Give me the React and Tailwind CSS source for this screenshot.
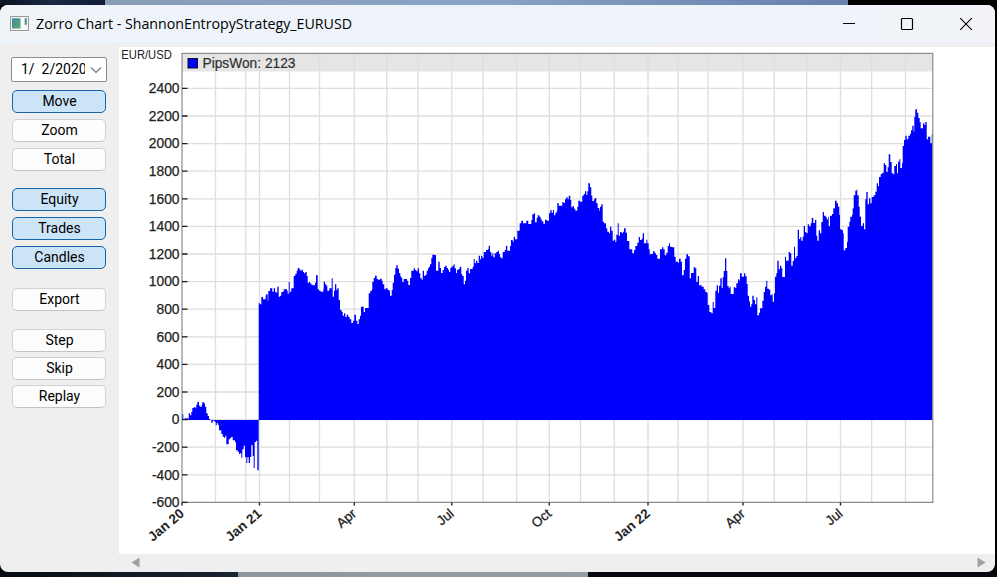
const toggleGroups = [
  {
    className: "mt-[8px] gap-[6px]",
    items: [
      { label: "Move", active: true },
      { label: "Zoom" },
      { label: "Total" },
    ],
  },
  {
    className: "mt-[17px] gap-[6px]",
    items: [
      { label: "Equity", active: true },
      { label: "Trades", active: true },
      { label: "Candles", active: true },
    ],
  },
  { className: "mt-[19px]", items: [{ label: "Export" }] },
  {
    className: "mt-[18px] gap-[5px]",
    items: [{ label: "Step" }, { label: "Skip" }, { label: "Replay" }],
  },
];

// Step series "x,y x,y ...", in thirds of a pixel from the segment's own origin
const segments = [
  {
    x: 120,
    y: 370,
    steps:
      "186,133 190,148 194,145 205,148 206,130 210,136 214,126 217,114 221,112 227,115 229,104 232,96 237,107 241,111 245,104 247,96 251,100 255,110 259,130 263,138 267,147 271,150 274,158 278,152 284,156 287,166 290,160 294,165 297,181 304,192 308,200 312,203 316,197 319,223 326,208 330,204 334,201 338,211 345,217 348,241 353,245 357,252 361,249 364,263 367,238 371,227 375,261 379,279 382,262 386,279 390,261 394,226 398,258 401,294 404,216 408,212 412,301",
  },
  {
    x: 250,
    y: 250,
    steps:
      "26,160 30,163 34,141 39,148 43,148 47,136 49,133 53,152 55,123 60,115 67,125 71,115 75,125 79,128 82,110 86,140 90,137 94,126 99,125 101,118 111,122 113,131 116,96 119,130 120,125 124,115 131,78 136,71 140,62 143,54 148,58 151,62 155,59 159,66 162,70 166,66 170,78 173,98 177,96 180,100 184,104 188,106 195,98 198,76 203,118 207,122 212,125 220,118 221,95 225,103 229,107 232,122 238,115 245,85 248,140 252,122 255,103 259,120 262,115 266,150 270,180 275,186 278,197 282,190 286,201 290,194 295,201 299,208 304,219 309,212 313,194 318,212 322,222 326,208 330,197 333,170 341,186 345,174 356,130 361,122 366,118 367,95 371,84 375,77 380,87 384,89 390,86 395,92 398,103 403,118 407,115 413,120 418,122 420,137 425,120 428,98 432,74 436,54 439,46 443,56 447,69 451,79 454,84 457,96 461,87 471,92 475,105 480,84 484,62 491,55 495,60 499,64 503,55 507,70 511,85 515,89 518,62 522,78 526,74 530,62 534,55 537,50",
  },
  {
    x: 430,
    y: 170,
    steps:
      "0,283 4,264 7,254 14,255 18,302 25,275 29,294 33,309 38,300 42,291 46,287 50,294 54,299 57,306 61,294 64,290 68,287 71,283 74,295 78,309 81,300 85,297 89,290 94,313 97,318 101,343 105,332 108,302 112,294 116,310 120,297 128,290 131,267 134,280 138,272 142,279 146,257 150,268 153,257 157,264 161,246 168,240 174,238 176,227 180,246 184,257 187,250 190,262 194,250 199,246 203,242 207,252 210,262 214,265 218,246 224,240 228,227 232,242 240,228 243,210 248,215 251,200 255,208 262,182 269,160 274,152 279,160 289,152 295,162 304,150 307,133 312,130 315,157 320,143 323,136 328,140 332,148 335,154 340,161 345,149 350,152 357,130 361,121 365,128 369,119 372,136 376,128 380,122 382,99 386,107 397,96 401,99 405,88 409,82 413,88 416,77 421,90 424,112 428,108 432,116 436,122 442,110 445,92 450,95 457,77 461,72 465,64 469,75 472,64 475,40 480,52 484,77 487,93 492,88 495,84 499,100 503,114 508,122",
  },
  {
    x: 600,
    y: 190,
    steps:
      "0,50 4,43 8,95 12,100 18,115 22,125 27,130 30,110 34,122 38,152 42,149 46,156 49,134 53,100 56,137 60,126 65,130 69,125 72,115 77,128 81,153 88,178 97,190 102,180 106,168 112,158 116,141 120,150 125,146 128,130 132,160 139,149 142,160 146,178 149,193 155,192 159,184 164,190 168,195 172,206 177,206 180,178 186,172 190,178 194,196 199,188 203,168 207,160 210,170 215,172 223,200 227,215 234,218 237,206 242,215 246,256 251,240 255,206 259,193 264,199 269,265 273,249 281,232 286,235 289,276 293,258 297,286 305,290 311,298 316,306 321,310 323,345 328,366 334,370 338,336 341,354 346,302 350,286 354,308 357,287 361,265 365,294 368,262 371,243 375,205 379,243 382,288 386,295 389,290 392,312 401,292 406,294 409,280 414,268 418,272 420,250 425,260 432,250 436,259 440,282 443,317 447,334",
  },
  {
    x: 750,
    y: 90,
    steps:
      "0,650 4,643 7,617 11,630 15,643 19,622 22,676 27,668 30,655 37,632 41,606 45,590 49,572 52,596 57,599 61,616 65,613 68,635 72,610 75,560 79,550 82,512 86,538 90,527 94,535 97,561 105,500 108,512 116,486 120,490 124,527 128,513 132,470 135,505 139,498 143,419 147,447 151,441 154,452 158,440 161,408 165,426 169,430 173,403 177,409 182,400 185,384 190,399 195,390 199,437 202,452 206,421 210,430 214,396 218,366 222,377 227,381 230,388 234,380 236,409 240,377 246,372 250,355 255,332 260,340 264,350 268,374 270,418 275,421 279,430 281,481 286,474 291,456 293,410 298,395 301,380 306,374 308,355 311,316 316,302 320,298 322,316 326,350 329,380 333,408 338,400 342,418 346,328 349,306 353,343 357,325 361,340 365,321 371,316 376,305 380,280 384,288 387,261 392,252 397,248 401,220 405,225 409,246 413,232 416,193 421,216 425,250 430,253 433,228 438,222 441,250 444,215 448,208 451,234 456,220 458,168 462,150 466,137 470,148 475,137 480,132 483,121 487,107 491,125 493,80 496,58 501,68 505,84 509,97 512,115 519,100 523,105 526,96 530,148 534,140 541,160 545,133",
  },
];

const ZERO_Y = 420;

const buildAreaPath = () => {
  let d = `M182 ${ZERO_Y}`;
  segments.forEach((segment, index) => {
    // the equity jumps after the first segment, so it is closed on the zero line
    if (index === 1) d += `H258.7V${ZERO_Y}`;
    segment.steps.split(" ").forEach((step) => {
      const [x, y] = step.split(",").map(Number);
      d += `H${(segment.x + x / 3).toFixed(1)}V${(segment.y + y / 3).toFixed(1)}`;
    });
  });
  return `${d}H932.5V${ZERO_Y}Z`;
};

const gridX = [
  215.5, 245.8, 259.5, 289.5, 319.5, 354.3, 386.8, 418, 451.8, 483, 516.7,
  549.3, 580.5, 614.3, 648, 678, 708, 743, 774.2, 806.7, 840.5, 871.7, 905.5,
];

const yTicks = [
  2400, 2200, 2000, 1800, 1600, 1400, 1200, 1000, 800, 600, 400, 200, 0, -200,
  -400, -600,
];

const xTicks = [
  { label: "Jan 20", x: 182, bold: true },
  { label: "Jan 21", x: 259.5, bold: true },
  { label: "Apr", x: 354.3 },
  { label: "Jul", x: 451.8 },
  { label: "Oct", x: 549.3 },
  { label: "Jan 22", x: 648, bold: true },
  { label: "Apr", x: 743 },
  { label: "Jul", x: 840.5 },
];

const tickY = (value) => 419.6 - value * 0.138;

function EquityChart() {
  return (
    <svg
      width="876"
      height="507"
      viewBox="119 47 876 507"
      className="block bg-white font-['Liberation_Sans',sans-serif]"
    >
      <rect x="182" y="53" width="751" height="18.5" fill="#e5e5e5" />
      <g stroke="#dedede" strokeWidth="1.3">
        {gridX.map((x) => (
          <line key={x} x1={x} x2={x} y1="54" y2="502" />
        ))}
        {yTicks.map((v) => (
          <line key={v} x1="182" x2="932" y1={tickY(v)} y2={tickY(v)} />
        ))}
      </g>
      <path d={buildAreaPath()} fill="#00f" />
      <rect
        x="182"
        y="53.4"
        width="750.8"
        height="449"
        fill="none"
        stroke="#8c8c8c"
        strokeWidth="1.2"
      />

      {/* Legend */}
      <rect x="188" y="58.5" width="9.5" height="9.5" fill="#00f" stroke="#111" />
      <text
        x="202.5"
        y="68"
        fontSize="14.2"
        fill="#303030"
        stroke="#303030"
        strokeWidth="0.2"
        textLength="93"
        lengthAdjust="spacingAndGlyphs"
      >
        PipsWon: 2123
      </text>
      <text
        x="121.3"
        y="59"
        fontSize="12"
        fill="#222"
        textLength="50.5"
        lengthAdjust="spacingAndGlyphs"
      >
        EUR/USD
      </text>

      {/* Axes */}
      {yTicks.map((v) => (
        <g key={v}>
          <line
            x1="182"
            x2="187.5"
            y1={tickY(v)}
            y2={tickY(v)}
            stroke="#222"
            strokeWidth="1.3"
          />
          <text
            x="179.5"
            y={tickY(v) + 4.8}
            fontSize="13.8"
            textAnchor="end"
            fill="#222"
            stroke="#222"
            strokeWidth="0.25"
          >
            {v}
          </text>
        </g>
      ))}
      {xTicks.map(({ label, x, bold }) => (
        <g key={x}>
          <line
            x1={x}
            x2={x}
            y1="502.5"
            y2="505.5"
            stroke="#222"
            strokeWidth="1.4"
          />
          <text
            transform={`translate(${x + 3} 515) rotate(-40)`}
            fontSize="13.5"
            fontWeight={bold ? 700 : 400}
            textAnchor="end"
            fill="#222"
            stroke="#222"
            strokeWidth={bold ? 0 : 0.3}
          >
            {label}
          </text>
        </g>
      ))}
    </svg>
  );
}

function SideButton({ label, active }) {
  return (
    <button
      className={
        active
          ? "flex h-[23px] w-[94px] items-center justify-center rounded-[5px] border border-[#1565a8] bg-[#cce4f7] pb-px pl-px text-[14px] leading-none text-black"
          : "flex h-[23px] w-[94px] items-center justify-center rounded-[5px] border border-[#d2d2d2] border-b-[#c3c3c3] bg-[#fdfdfd] pb-px pl-px text-[14px] leading-none text-black"
      }
    >
      {label}
    </button>
  );
}

function TitleBar() {
  return (
    <header className="flex h-[38px] shrink-0 items-center bg-linear-to-r from-[#eff4f9] via-[#eef3fb] to-[#f1f3f8] pl-[10px]">
      <svg width="19" height="15" viewBox="0 0 19 15" className="mb-[2px]">
        <defs>
          <linearGradient id="appIcon" x1="0" y1="0" x2="1" y2="1">
            <stop offset="0" stopColor="#4584a8" />
            <stop offset="1" stopColor="#58ad72" />
          </linearGradient>
        </defs>
        <rect x="0.5" y="0.5" width="18" height="14" fill="#f4f4f4" stroke="#999" />
        <rect x="2" y="2.3" width="8.5" height="10.2" fill="url(#appIcon)" />
        <rect x="11.5" y="2" width="2" height="11" fill="#fff" />
        <rect x="14.7" y="2.3" width="2.2" height="6.5" fill="url(#appIcon)" />
      </svg>
      <svg
        width="324"
        height="28"
        viewBox="0 0 324 28"
        className="mb-[2px] ml-[6px] overflow-visible font-['Open_Sans',sans-serif]"
      >
        <text x="1" y="19.5" fontSize="15" textLength="316" lengthAdjust="spacingAndGlyphs">
          Zorro Chart - ShannonEntropyStrategy_EURUSD
        </text>
      </svg>
      <div className="mr-[22px] ml-auto flex items-center gap-[45px] text-black">
        <svg width="14" height="14" viewBox="0 0 14 14" stroke="currentColor">
          <path d="M2 6.5H14" />
        </svg>
        <svg width="14" height="14" viewBox="0 0 14 14" fill="none" stroke="currentColor">
          <rect x="1.5" y="1.5" width="11" height="11" rx="1" strokeWidth="1.2" />
        </svg>
        <svg width="14" height="14" viewBox="0 0 14 14" stroke="currentColor">
          <path d="M1.2 1.2L12.8 12.8M12.8 1.2L1.2 12.8" strokeWidth="1.1" />
        </svg>
      </div>
    </header>
  );
}

export default function App() {
  return (
    <div className="flex h-[577px] w-[997px] flex-col overflow-hidden bg-black font-['Roboto',sans-serif]">
      <div className="flex h-[5px] shrink-0">
        <div className="w-[105px] bg-linear-to-r from-[#0b1224] via-[#1c2943] to-[#101b33]" />
        <div className="w-[743px] bg-linear-to-r from-[#899db8] via-[#8aa3c5] to-[#687fac]" />
      </div>

      <main className="flex h-[567px] w-[995px] shrink-0 flex-col overflow-hidden rounded-[8px] bg-[#efefef]">
        <TitleBar />
        <div className="flex min-h-0 flex-1">
          <aside className="flex w-[119px] shrink-0 flex-col pt-[14px] pl-[12px]">
            <div className="-ml-px flex h-[25px] w-[96px] items-center rounded-[2px] border border-[#8c8c8c] bg-white pb-px pl-[9px]">
              <div className="w-[64px] overflow-hidden text-[14px] leading-[18px] whitespace-pre">
                1/  2/2020
              </div>
              <svg
                width="12"
                height="8"
                viewBox="0 0 12 8"
                fill="none"
                stroke="#777"
                strokeWidth="1.2"
                className="mt-[2px] ml-[5px] shrink-0"
              >
                <path d="M1 1.5L6 6.5L11 1.5" />
              </svg>
            </div>
            {toggleGroups.map((group) => (
              <div
                key={group.items[0].label}
                className={`flex flex-col ${group.className}`}
              >
                {group.items.map((item) => (
                  <SideButton key={item.label} {...item} />
                ))}
              </div>
            ))}
          </aside>

          <section className="flex flex-1 flex-col pt-[4px]">
            <EquityChart />
            <div className="flex flex-1 items-center justify-between pr-[9px] pb-[2px] pl-[12px]">
              <svg width="9" height="11" viewBox="0 0 9 11" fill="#a0a0a0">
                <path d="M8.5 0.5V10.5L0.5 5.5Z" />
              </svg>
              <svg width="9" height="11" viewBox="0 0 9 11" fill="#a0a0a0">
                <path d="M0.5 0.5V10.5L8.5 5.5Z" />
              </svg>
            </div>
          </section>
        </div>
      </main>

      <div className="flex flex-1">
        <div className="w-[238px] bg-linear-to-r from-[#070b10] via-[#101a24] to-[#182430]" />
        <div className="w-[350px] bg-linear-to-r from-[#8d979e] to-[#929da5]" />
        <div className="flex-1 bg-[#05080e]" />
      </div>
    </div>
  );
}
